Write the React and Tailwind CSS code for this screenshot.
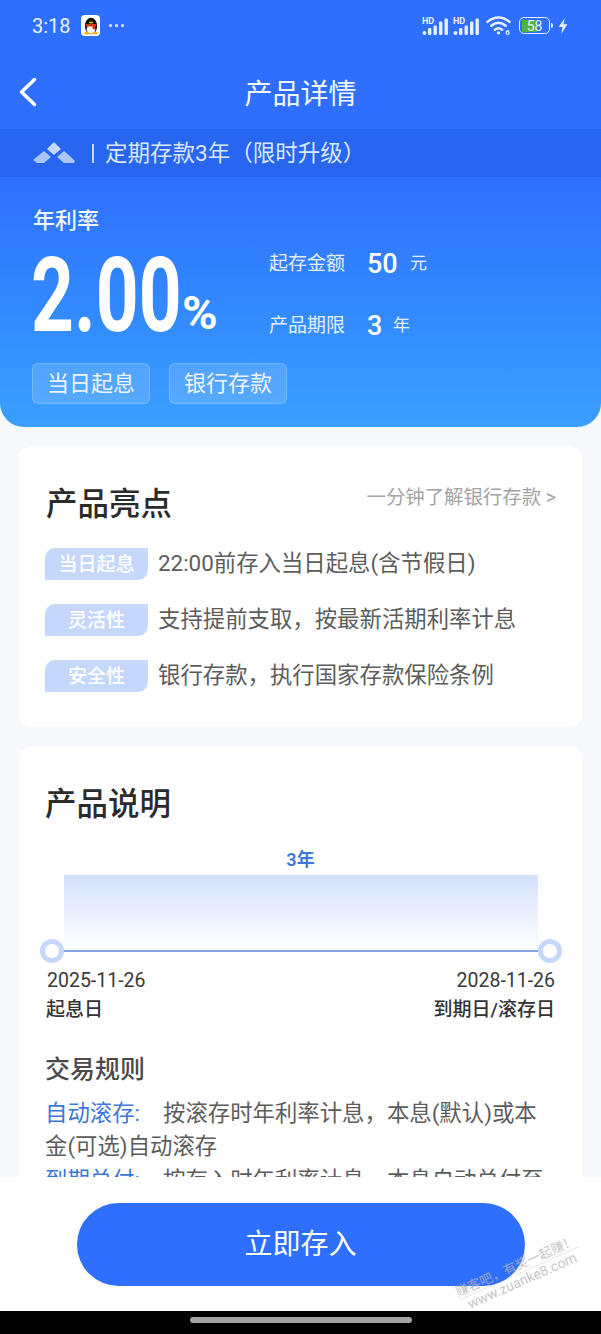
import React from "react";

const cjk = "font-['Roboto','Noto_Sans_CJK_SC',sans-serif]";

const highlights = [
  { tag: "当日起息", text: "22:00前存入当日起息(含节假日)" },
  { tag: "灵活性", text: "支持提前支取，按最新活期利率计息" },
  { tag: "安全性", text: "银行存款，执行国家存款保险条例" },
];

const SignalIcon = () => (
  <svg width="27" height="20" viewBox="0 0 27 20" fill="#e8f0ff">
    <text x="0" y="7.500" fontSize="9" fontWeight="700" fontFamily="Roboto, sans-serif">HD</text>
    <circle cx="2.500" cy="17" r="2" />
    <rect x="6" y="12" width="3.400" height="7" rx="1.200" />
    <rect x="11.500" y="9.500" width="3.400" height="9.500" rx="1.200" />
    <rect x="17" y="5.500" width="3.400" height="13.500" rx="1.200" />
    <rect x="22.500" y="2.500" width="3.400" height="16.500" rx="1.200" />
  </svg>
);

const QqIcon = () => (
  <div className="w-[19px] h-[21px] bg-white rounded-[4px] flex items-center justify-center">
    <svg width="16" height="19" viewBox="0 0 15 18">
      <ellipse cx="7.500" cy="9.500" rx="5.800" ry="7.800" fill="#111" />
      <ellipse cx="7.500" cy="12.500" rx="4" ry="4.400" fill="#fff" />
      <rect x="2.400" y="7.600" width="10.200" height="2.400" rx="1" fill="#e0301e" />
      <rect x="9" y="9" width="2.400" height="3.600" fill="#e0301e" />
      <ellipse cx="7.500" cy="6.200" rx="2" ry="1" fill="#f5b21a" />
      <ellipse cx="3.600" cy="16.400" rx="2.800" ry="1.200" fill="#f5b21a" />
      <ellipse cx="11.400" cy="16.400" rx="2.800" ry="1.200" fill="#f5b21a" />
    </svg>
  </div>
);

const StatusBar = () => (
  <div className="h-[50px] flex items-center justify-between pl-[32px] pr-[33px] pt-[1px]">
    <div className="flex items-center">
      <span className="text-[20px] text-[#e8f0ff] font-['Roboto',sans-serif] w-[39px]">3:18</span>
      <div className="ml-[10px]">
        <QqIcon />
      </div>
      <div className="flex gap-[3px] ml-[9px]">
        <span className="w-[3px] h-[3px] rounded-full bg-[#e8f0ff]" />
        <span className="w-[3px] h-[3px] rounded-full bg-[#e8f0ff]" />
        <span className="w-[3px] h-[3px] rounded-full bg-[#e8f0ff]" />
      </div>
    </div>
    <div className="flex items-center">
      <SignalIcon />
      <div className="ml-[4px]">
        <SignalIcon />
      </div>
      <svg className="ml-[6px]" width="25" height="21" viewBox="0 0 24 19" fill="none" stroke="#e8f0ff" strokeWidth="2.400" strokeLinecap="round">
        <path d="M1.500 6C8 0.500 16 0.500 22.500 6" />
        <path d="M5 9.800C9.500 6 14.500 6 19 9.800" />
        <path d="M8.500 13.500C11 11.500 13 11.500 15.500 13.500" />
        <circle cx="12" cy="16.500" r="1.600" fill="#e8f0ff" stroke="none" />
        <text x="18.500" y="18.800" fontSize="7.500" fontWeight="700" fill="#e8f0ff" stroke="none" fontFamily="Roboto, sans-serif">6</text>
      </svg>
      <div className="ml-[8px] relative w-[31px] h-[17px] border-[1.5px] border-[#e8f0ff] rounded-[5px] p-[1.5px]">
        <div className="h-full w-[58%] bg-[#4fb43a] rounded-[1px]" />
        <span className="absolute inset-0 flex items-center justify-center text-[14px] leading-none text-[#e8f0ff] font-['Roboto',sans-serif]">58</span>
      </div>
      <span className="w-[2px] h-[5px] bg-[#e8f0ff] ml-[1px] rounded-r-sm" />
      <svg className="ml-[5px]" width="10" height="16" viewBox="0 0 9 14" fill="#e8f0ff">
        <path d="M6 0 0.500 8H4L3 14 8.500 5.500H5Z" />
      </svg>
    </div>
  </div>
);

const Hero = () => (
  <div className="h-[250px] rounded-b-[24px] bg-gradient-to-b from-[#2f6fff] to-[#3a9fff] pl-[33px] pt-[30px] text-white">
    <div className="text-[22px] leading-[28px] font-medium text-[#f2f6ff]">年利率</div>
    <div className="flex items-start mt-[6px] h-[110px]">
      <div className="w-[236px] h-[110px] flex items-end pb-[18px]">
        <span className="text-[104px] leading-[74px] font-['Roboto',sans-serif] font-bold origin-left scale-x-[0.72] inline-block w-[151px] -ml-[2px] whitespace-nowrap">2.00</span>
        <span className="text-[46px] leading-[33px] font-['Roboto',sans-serif] font-bold origin-left scale-x-[1.05] inline-block mb-[3px]">%</span>
      </div>
      <div className="flex flex-col gap-[26px] mt-[5px]">
        <div className="flex items-center h-[36px]">
          <span className="text-[19px] text-[#e6efff] w-[98px]">起存金额</span>
          <span className="text-[27px] font-medium font-['Roboto',sans-serif] w-[43px]">50</span>
          <span className="text-[17px] text-[#e6efff]">元</span>
        </div>
        <div className="flex items-center h-[36px]">
          <span className="text-[19px] text-[#e6efff] w-[98px]">产品期限</span>
          <span className="text-[27px] font-medium font-['Roboto',sans-serif] w-[26px]">3</span>
          <span className="text-[17px] text-[#e6efff]">年</span>
        </div>
      </div>
    </div>
    <div className="flex gap-[19px] -ml-[1px] mt-[12px]">
      <span className="w-[118px] h-[41px] flex items-center justify-center rounded-[6px] bg-white/15 border border-white/20 text-[22px] text-[#eef4ff]">当日起息</span>
      <span className="w-[118px] h-[41px] flex items-center justify-center rounded-[6px] bg-white/15 border border-white/20 text-[22px] text-[#eef4ff]">银行存款</span>
    </div>
  </div>
);

const Highlights = () => (
  <div className="bg-white rounded-[12px] h-[281px] pl-[26px] pr-[26px] pt-[39px]">
    <div className="flex items-start justify-between">
      <h2 className="text-[31.500px] leading-[40px] font-medium text-[#2b2b2b] ml-[1px]">产品亮点</h2>
      <span className="text-[19.400px] leading-[30px] text-[#a3a3a3] -mt-[2px]">一分钟了解银行存款 &gt;</span>
    </div>
    <div className="flex flex-col gap-[24px] mt-[23px]">
      {highlights.map((h) => (
        <div key={h.tag} className="flex items-center h-[32px]">
          <span className="w-[103px] h-[32px] pt-[2px] flex items-center justify-center rounded-tl-[10px] rounded-br-[10px] bg-[#c5d8fb] text-white text-[19px] font-medium">
            {h.tag}
          </span>
          <span className="ml-[10px] text-[22.400px] text-[#5c5c5c] whitespace-nowrap">{h.text}</span>
        </div>
      ))}
    </div>
  </div>
);

const Timeline = () => (
  <div className="mt-[23px]">
    <div className="text-center text-[18px] leading-[24px] font-semibold text-[#3b78d8]">3年</div>
    <div className="ml-[19px] mr-[18px] mt-[3px] relative">
      <div className="h-[75px] bg-gradient-to-b from-[#d3e1fb] to-white" />
      <div className="h-[2px] bg-[#7ea3e6]" />
      <span className="absolute -left-[24px] top-[64px] w-[24px] h-[24px] rounded-full border-[5px] border-[#c5d8fb] bg-white" />
      <span className="absolute -right-[24px] top-[64px] w-[24px] h-[24px] rounded-full border-[5px] border-[#c5d8fb] bg-white" />
    </div>
    <div className="flex justify-between mt-[14px] ml-[2px] mr-[1px]">
      <div>
        <div className="text-[19.500px] leading-[30px] text-[#3a3a3a] font-['Roboto',sans-serif]">2025-11-26</div>
        <div className="text-[19px] leading-[28px] font-medium text-[#333] -ml-[1px]">起息日</div>
      </div>
      <div className="text-right">
        <div className="text-[19.500px] leading-[30px] text-[#3a3a3a] font-['Roboto',sans-serif]">2028-11-26</div>
        <div className="text-[19px] leading-[28px] font-medium text-[#333]">到期日/滚存日</div>
      </div>
    </div>
  </div>
);

const Explain = () => (
  <div className="bg-white rounded-t-[12px] mt-[19px] pl-[26px] pr-[26px] pt-[39px] pb-[40px]">
    <h2 className="text-[31.500px] leading-[40px] font-medium text-[#2b2b2b]">产品说明</h2>
    <Timeline />
    <h3 className="mt-[30px] text-[25px] leading-[32px] font-medium text-[#4a4a4a]">交易规则</h3>
    <p className="mt-[11px] text-[22.400px] leading-[33px] text-[#5c5c5c]">
      <span className="text-[#3b78d8] inline-block w-[118px]">自动滚存:</span>按滚存时年利率计息，本息(默认)或本金(可选)自动滚存
    </p>
    <p className="text-[22.400px] leading-[33px] text-[#5c5c5c] mt-[1px]">
      <span className="text-[#3b78d8] inline-block w-[118px]">到期兑付:</span>按存入时年利率计息，本息自动兑付至
    </p>
  </div>
);

export default function App() {
  return (
    <div className={`relative w-[601px] h-[1334px] flex flex-col overflow-hidden bg-[#f6f8fb] ${cjk}`}>
      <div className="bg-[#2f6fff]">
        <StatusBar />
        <div className="h-[79px] relative flex items-center justify-center text-white">
          <svg className="absolute left-[18px] top-[27px]" width="20" height="30" viewBox="0 0 20 30" fill="none" stroke="#fff" strokeWidth="3.500" strokeLinecap="round" strokeLinejoin="round">
            <path d="M16.500 2.500 3.500 15l13 12.500" />
          </svg>
          <span className="text-[28px] text-[#f2f6ff] mt-[11px]">产品详情</span>
        </div>
        <div className="h-[48px] bg-[#2866f0] flex items-center pl-[32px]">
          <svg width="44" height="24" viewBox="0 0 44 24" fill="#a9c5fb">
            <path d="M22 1 29 8 22 14 15 8Z" fill="#c4d7fd" />
            <path d="M12 10 19 16 12 22 5 22 1 19Z" />
            <path d="M32 10 39 16 43 20 42 22 32 22 25 16Z" />
          </svg>
          <span className="ml-[16px] w-[2px] h-[19px] bg-[#c9daff]" />
          <span className="ml-[11px] mt-[2px] text-[22.500px] text-[#dbe7ff]">定期存款3年（限时升级）</span>
        </div>
      </div>
      <div className="flex-1 overflow-hidden">
        <Hero />
        <div className="mx-[19px] mt-[19px]">
          <Highlights />
          <Explain />
        </div>
      </div>
      <div className="h-[134px] bg-white pt-[26px] flex justify-center shrink-0">
        <button className="w-[448px] h-[83px] rounded-full bg-[#2f6fff] text-white text-[28px]">立即存入</button>
      </div>
      <div className="h-[23px] bg-black flex justify-center pt-[6px] shrink-0">
        <div className="w-[222px] h-[6px] rounded-full bg-[#a3a3a3]" />
      </div>
      {/* watermark */}
      <div className="absolute left-[454px] top-[1258px] -rotate-[24deg] text-[#b5b5b5]/80 leading-[15px] text-center">
        <div className="text-[13px] whitespace-nowrap">赚客吧，有奖一起赚！</div>
        <div className="text-[14px] whitespace-nowrap border-t border-[#b5b5b5]/30 font-['Roboto',sans-serif]">www.zuanke8.com</div>
      </div>
    </div>
  );
}
